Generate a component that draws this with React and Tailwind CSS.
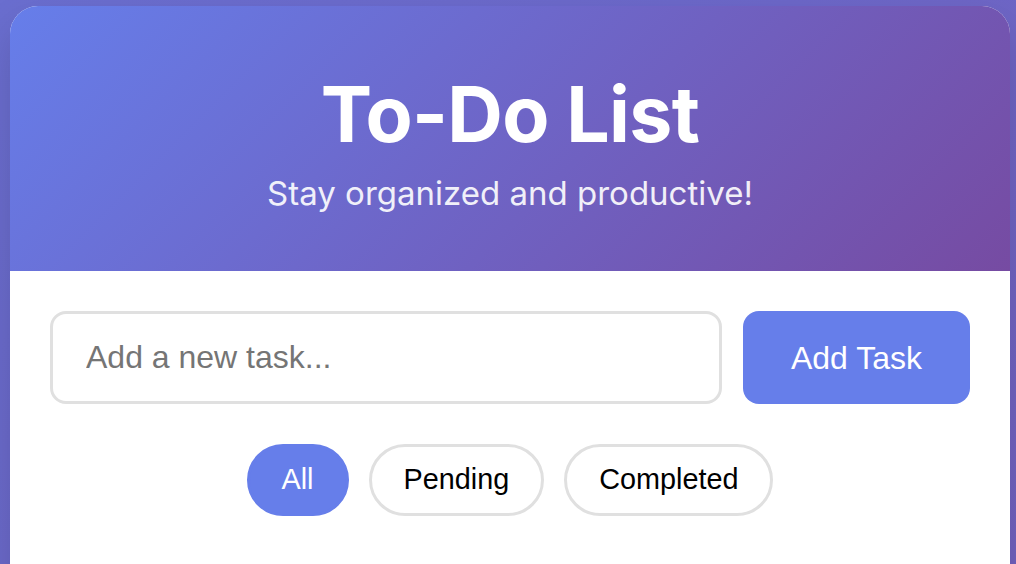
import React from "react";

export default function App() {
  return (
    <div className="w-[1016px] h-[564px] overflow-hidden bg-[linear-gradient(135deg,#6a6ecf_0%,#6c67c8_50%,#7262bf_100%)] pt-[6px] pl-[10px]">
      <div className="w-[1000px] bg-white rounded-t-[28px] overflow-hidden shadow-[0_20px_40px_rgba(0,0,0,0.15)] h-[600px]">
        <div className="h-[265px] bg-[linear-gradient(135deg,#667eea_0%,#764ba2_100%)] flex flex-col items-center pt-[70px] text-white [font-family:Inter,'Noto_Sans',sans-serif]">
          <h1 className="text-[77px] leading-none font-bold tracking-[-0.7px]">To-Do List</h1>
          <p className="mt-[24px] text-[33px] leading-none opacity-90">Stay organized and productive!</p>
        </div>
        <div className="px-[40px] pt-[40px] [font-family:'Liberation_Sans',Arial,sans-serif]">
          <div className="flex gap-[21px]">
            <input
              type="text"
              placeholder="Add a new task..."
              className="flex-1 min-w-0 h-[93px] border-[3px] border-[#e0e0e0] rounded-[16px] pl-[33px] text-[32px] text-[#333] placeholder:text-[#757575] outline-none"
            />
            <button className="w-[227px] h-[93px] bg-[#667eea] text-white text-[32px] rounded-[16px]">
              Add Task
            </button>
          </div>
          <div className="flex justify-center gap-[20px] mt-[40px]">
            <button className="h-[72px] px-[32px] border-[3px] border-[#667eea] bg-[#667eea] text-white text-[28.8px] rounded-full">
              All
            </button>
            <button className="h-[72px] px-[32px] border-[3px] border-[#e0e0e0] bg-white text-black text-[28.8px] rounded-full">
              Pending
            </button>
            <button className="h-[72px] px-[32px] border-[3px] border-[#e0e0e0] bg-white text-black text-[28.8px] rounded-full">
              Completed
            </button>
          </div>
        </div>
      </div>
    </div>
  );
}
